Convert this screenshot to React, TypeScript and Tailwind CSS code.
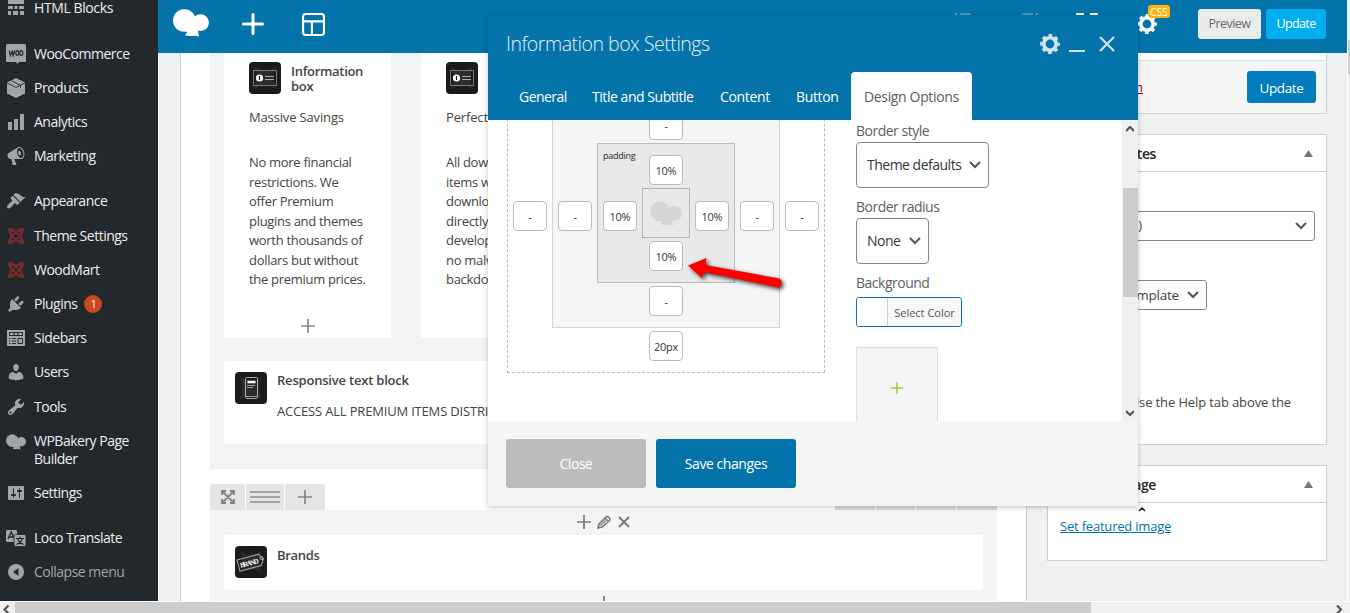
import type { ReactNode } from "react";

const PATHS = {
  bars: "M18 18V2h-4v16h4zm-6 0V7H8v11h4zm-6 0v-8H2v8h4z",
  megaphone:
    "M18.15 5.94c.46 1.62.38 3.22-.02 4.48-.42 1.28-1.26 2.18-2.3 2.48-.16.06-.26.06-.4.06-.06.02-.12.02-.18.02-.06.02-.14.02-.22.02h-6.8l2.22 5.5c.02.14-.06.26-.14.34-.08.1-.24.16-.34.16H6.95c-.1 0-.26-.06-.34-.16-.08-.08-.16-.2-.14-.34l-1-5.5H4.25l-.02-.02c-.5.06-1.08-.18-1.54-.62s-.88-1.08-1.06-1.88c-.24-.8-.2-1.56-.02-2.2.18-.62.58-1.08 1.06-1.3l.02-.02 9-5.4c.1-.06.18-.1.24-.16.06-.04.14-.08.24-.12.16-.08.28-.12.5-.18 1.04-.3 2.24.1 3.22.98s1.84 2.24 2.26 3.86zm-2.58 5.98h-.02c.4-.1.74-.34 1.04-.7.58-.7.86-1.76.86-3.04 0-.64-.1-1.3-.28-1.98-.34-1.36-1.02-2.5-1.78-3.24s-1.68-1.1-2.46-.88c-.82.22-1.4.96-1.7 2-.32 1.04-.28 2.36.06 3.72.38 1.36 1 2.5 1.8 3.24.78.74 1.62 1.1 2.48.88zm-2.54-7.08c.22-.04.42-.02.62.04.38.16.76.48 1.02 1s.42 1.2.42 1.78c0 .3-.04.56-.12.8-.18.48-.44.84-.86.94-.34.1-.8-.06-1.14-.4s-.64-.86-.78-1.5c-.18-.62-.12-1.24.02-1.72s.48-.84.82-.94z",
  brush:
    "M14.48 11.06L7.41 3.99l1.5-1.5c.5-.56 2.3-.47 3.51.32 1.21.8 1.43 1.28 2.91 2.1 1.18.64 2.45 1.26 4.45.85zm-.71.71L6.7 4.7 4.93 6.47c-.39.39-.39 1.02 0 1.41l1.06 1.06c.39.39.39 1.03 0 1.42-.6.6-1.43 1.11-2.21 1.69-.35.26-.7.53-1.01.84C1.43 14.23.4 16.08 1.4 17.07c.99 1 2.84-.03 4.18-1.36.31-.31.58-.66.85-1.02.57-.78 1.08-1.61 1.69-2.21.39-.39 1.02-.39 1.41 0l1.06 1.06c.39.39 1.02.39 1.41 0z",
  plug: "M13.11 4.36L9.87 7.6 8 5.73l3.24-3.24c.35-.34 1.05-.2 1.56.32.52.51.66 1.21.31 1.55zm-8 1.77l.91-1.12 9.01 9.01-1.19.84c-.71.71-2.63 1.16-3.82 1.16H6.14L4.9 17.26c-.59.59-1.54.59-2.12 0-.59-.58-.59-1.53 0-2.12l1.24-1.24v-3.88c0-1.13.4-3.19 1.09-3.89zm7.26 3.97l3.24-3.24c.34-.35 1.04-.21 1.55.31.52.51.66 1.21.31 1.55l-3.24 3.25z",
  user: "M10 9.25c-2.27 0-2.73-3.44-2.73-3.44C7 4.02 7.82 2 9.97 2c2.16 0 2.98 2.02 2.71 3.81 0 0-.41 3.44-2.68 3.44zm0 2.57L12.72 10c2.39 0 4.52 2.33 4.52 4.53v2.49s-3.65 1.13-7.24 1.13c-3.65 0-7.24-1.13-7.24-1.13v-2.49c0-2.25 1.94-4.48 4.47-4.48z",
  wrench:
    "M16.68 9.77c-1.34 1.34-3.3 1.67-4.95.99l-5.41 6.52c-.99.99-2.59.99-3.58 0s-.99-2.59 0-3.57l6.52-5.42c-.68-1.65-.35-3.61.99-4.95 1.28-1.28 3.12-1.62 4.72-1.06l-2.89 2.89 2.82 2.82 2.86-2.87c.53 1.58.18 3.39-1.08 4.65zM3.81 16.21c.4.39 1.04.39 1.43 0 .4-.4.4-1.04 0-1.43-.39-.4-1.03-.4-1.43 0-.39.39-.39 1.03 0 1.43z",
  sliders:
    "M18 16V4c0-.55-.45-1-1-1H3c-.55 0-1 .45-1 1v12c0 .55.45 1 1 1h14c.55 0 1-.45 1-1zM8 11h1c.55 0 1 .45 1 1s-.45 1-1 1H8v1.5c0 .28-.22.5-.5.5s-.5-.22-.5-.5V13H6c-.55 0-1-.45-1-1s.45-1 1-1h1V5.5c0-.28.22-.5.5-.5s.5.22.5.5V11zm5-2h-1c-.55 0-1-.45-1-1s.45-1 1-1h1V5.5c0-.28.22-.5.5-.5s.5.22.5.5V7h1c.55 0 1 .45 1 1s-.45 1-1 1h-1v5.5c0 .28-.22.5-.5.5s-.5-.22-.5-.5V9z",
};

function Dash({ d }: { d: string }) {
  return (
    <svg viewBox="0 0 20 20" className="size-5 fill-[#a0a5aa]">
      <path d={d} />
    </svg>
  );
}

function Bakery({ className }: { className: string }) {
  return (
    <svg viewBox="0 0 36 28" className={className}>
      <circle cx="11.3" cy="11.5" r="11.3" />
      <circle cx="27.6" cy="13.6" r="8.4" />
      <path d="M17 5l5 3 2-2 3 12-2 4 1 6-3-1.2-7 .2-4-.8 2-2.6-2.5-3z" />
    </svg>
  );
}

function Gear({ className }: { className: string }) {
  return (
    <svg viewBox="0 0 20 20" className={className} fill="none" stroke="currentColor">
      <circle cx="10" cy="10" r="6.2" strokeWidth="3.6" />
      <circle cx="10" cy="10" r="8.6" strokeWidth="2.6" strokeDasharray="3.6 3.154" strokeDashoffset="1.8" />
    </svg>
  );
}

function Plus({ className }: { className: string }) {
  return (
    <svg viewBox="0 0 14 14" className={className} fill="none" stroke="currentColor" strokeWidth="1.7">
      <path d="M7 0v14M0 7h14" />
    </svg>
  );
}

function Chevron({ className = "w-3 h-2" }: { className?: string }) {
  return (
    <svg viewBox="0 0 12 8" className={className} fill="none" stroke="#555" strokeWidth="2">
      <path d="M1 1l5 5 5-5" />
    </svg>
  );
}

function Knot() {
  return (
    <svg viewBox="0 0 20 20" className="size-[18px]" fill="none" stroke="#7c2a30" strokeWidth="1.9">
      <ellipse cx="10" cy="10" rx="10.6" ry="3" transform="rotate(45 10 10)" />
      <ellipse cx="10" cy="10" rx="10.6" ry="3" transform="rotate(-45 10 10)" />
      <path d="M3 3q7 4 14 0q-4 7 0 14q-7-4-14 0q4-7 0-14z" />
    </svg>
  );
}

const blocksIcon = (
  <svg viewBox="0 0 20 20" className="size-5 fill-[#a0a5aa]">
    <path d="M2 1h16v5H2zM2 8h5v3H2zM8.500 8h3v3h-3zM13 8h5v3h-5zM2 13h3v4H2zM7 13h5v4H7zM14 13h4v4h-4z" />
  </svg>
);
const wooIcon = (
  <svg viewBox="0 0 20 20" className="size-5">
    <path d="M1.500 0h17q1.500 0 1.500 1.500v15q0 1.500-1.500 1.500H13l-1.500 2-1.500-2H1.500Q0 18 0 16.500v-15Q0 0 1.500 0z" fill="#a0a5aa" />
    <path d="M3.300 6.500l1 5 1.900-4 1 4 1.500-5" fill="none" stroke="#23282d" strokeWidth="1.300" />
    <ellipse cx="11.300" cy="9" rx="1.500" ry="2.300" fill="none" stroke="#23282d" strokeWidth="1.200" />
    <ellipse cx="15.300" cy="9" rx="1.500" ry="2.300" fill="none" stroke="#23282d" strokeWidth="1.200" />
  </svg>
);
const boxIcon = (
  <svg viewBox="0 0 20 20" className="size-5">
    <path d="M10 0l9 4.500v11L10 20l-9-4.500v-11z" fill="#a0a5aa" />
    <path d="M1 5l9 4.500L19 5M5.500 2.800l9 4.500V10" fill="none" stroke="#23282d" strokeWidth=".9" />
  </svg>
);
const sidebarsIcon = (
  <svg viewBox="0 0 20 20" className="size-5">
    <path d="M1 2h18v16H1z" fill="#a0a5aa" />
    <path d="M3.500 4.500h13v3h-13zM8 4.500v3M12 4.500v3M12 10.500h4.500v5H12zM3 10.500h1.500M6 10.500h4M3 13h1.500M6 13h4M3 15.500h1.500M6 15.500h4" fill="none" stroke="#23282d" />
  </svg>
);
const locoIcon = (
  <svg viewBox="0 0 20 20" className="size-5">
    <rect y="2" width="11" height="12" rx="1.500" fill="#a0a5aa" />
    <path d="M2 11l3.300-7 3.300 7M3.300 9h4" fill="none" stroke="#23282d" strokeWidth="1.400" />
    <rect x="8" y="6.500" width="12" height="12" rx="1.500" fill="#a0a5aa" stroke="#23282d" strokeWidth=".8" />
    <path d="M10 10.500h8M14 8.500v2M16.500 10.500q-1.500 4-6 6M11.500 10.500q1.500 4 6 6" fill="none" stroke="#23282d" strokeWidth="1.100" />
  </svg>
);
const collapseIcon = (
  <svg viewBox="0 0 20 20" className="size-5">
    <circle cx="10" cy="10" r="8" fill="#a0a5aa" />
    <path d="M12.500 6v8L7 10z" fill="#23282d" />
  </svg>
);

type Item = { label: string; icon: ReactNode; cls?: string; badge?: string };

const MENU: Item[] = [
  { label: "HTML Blocks", icon: blocksIcon, cls: "-mt-[9px] tracking-[-0.4px]" },
  { label: "WooCommerce", icon: wooIcon, cls: "mt-3" },
  { label: "Products", icon: boxIcon },
  { label: "Analytics", icon: <Dash d={PATHS.bars} /> },
  { label: "Marketing", icon: <Dash d={PATHS.megaphone} /> },
  { label: "Appearance", icon: <Dash d={PATHS.brush} />, cls: "mt-[11px]" },
  { label: "Theme Settings", icon: <Knot />, cls: "mt-px" },
  { label: "WoodMart", icon: <Knot /> },
  { label: "Plugins", icon: <Dash d={PATHS.plug} />, badge: "1" },
  { label: "Sidebars", icon: sidebarsIcon },
  { label: "Users", icon: <Dash d={PATHS.user} /> },
  { label: "Tools", icon: <Dash d={PATHS.wrench} />, cls: "mt-px" },
  { label: "WPBakery Page Builder", icon: <Bakery className="w-5 h-4 mt-0.5 fill-[#a0a5aa]" />, cls: "h-[52px]" },
  { label: "Settings", icon: <Dash d={PATHS.sliders} /> },
  { label: "Loco Translate", icon: locoIcon, cls: "mt-[11px]" },
  { label: "Collapse menu", icon: collapseIcon, cls: "text-[#a0a5aa] tracking-[-0.5px]" },
];

function Sidebar() {
  return (
    <nav className="w-[158px] shrink-0 bg-[#23282d] overflow-hidden flex flex-col text-sm leading-[18px] tracking-[-0.5px] text-[#eee]">
      {MENU.map((m) => (
        <a key={m.label} className={`flex min-h-[34px] shrink-0 items-start pt-2 pl-1.5 ${m.cls ?? ""}`}>
          <span className="w-5 h-[18px] mr-2 flex items-center justify-center shrink-0">{m.icon}</span>
          <span className="w-[105px]">
            {m.label}
            {m.badge && (
              <span className="ml-[7px] inline-flex size-[18px] items-center justify-center rounded-full bg-[#ca4a1f] text-[11px] text-white align-top">
                {m.badge}
              </span>
            )}
          </span>
        </a>
      ))}
    </nav>
  );
}

function TopBar() {
  return (
    <header className="h-[53px] shrink-0 bg-[#0473aa] flex items-start text-white">
      <Bakery className="w-9 h-7 mt-[9px] ml-[15px] fill-white" />
      <svg viewBox="0 0 22 22" className="size-[22px] mt-[13px] ml-[33px]" stroke="currentColor" strokeWidth="3" strokeLinecap="round">
        <path d="M11 1.500v19M1.500 11h19" />
      </svg>
      <svg viewBox="0 0 22 22" className="size-[23px] mt-[13px] ml-[38px]" fill="none" stroke="currentColor" strokeWidth="2">
        <rect x="1" y="1" width="20" height="20" rx="2.500" />
        <path d="M1 8h20M9.500 8v13" />
      </svg>
      <svg viewBox="0 0 18 22" className="w-[18px] h-[22px] mt-[13px] ml-[630px] opacity-30" fill="none" stroke="currentColor" strokeWidth="3">
        <path d="M1 0v8M5 1.500h9q3 2 3 7" />
      </svg>
      <svg viewBox="0 0 18 22" className="w-[18px] h-[22px] mt-[13px] ml-[47px] opacity-30" fill="none" stroke="currentColor" strokeWidth="3">
        <path d="M17 0v8M13 1.500H4Q1 3.500 1 8" />
      </svg>
      <svg viewBox="0 0 22 22" className="size-[22px] mt-[13px] ml-[38px]" fill="none" stroke="currentColor" strokeWidth="3">
        <path d="M8 1.500H1.500V8M14 1.500h6.500V8" />
      </svg>
      <div className="relative mt-[14px] ml-[39px]">
        <Gear className="size-5" />
        <span className="absolute left-[11px] -top-[9px] w-[22px] h-[13px] rounded-[3px] bg-[#ffb411] text-[10px] leading-[14px] text-center">CSS</span>
      </div>
      <button className="ml-[41px] mt-[9px] h-[30px] w-[63px] rounded-[3px] bg-[#ebebeb] pt-px text-[12.500px] tracking-[-0.55px] text-[#646970]">Preview</button>
      <button className="ml-[5px] mt-[9px] h-[30px] w-[60px] rounded-[3px] bg-[#00aef0] pt-px text-[12.500px] tracking-[-0.6px]">Update</button>
    </header>
  );
}

function Tile({ kind }: { kind: "info" | "text" | "brand" }) {
  return (
    <svg viewBox="0 0 32 32" className="size-8 shrink-0">
      <rect width="32" height="32" rx="4" fill="#1b1b1b" />
      <path d="M5 5q11 7 22 0-5 11 0 22-11-7-22 0 5-11 0-22z" fill="#2c2c2c" />
      {kind === "info" && (
        <>
          <rect x="4.500" y="8.500" width="23" height="15" fill="none" stroke="#777" />
          <circle cx="10.500" cy="16" r="3.600" fill="#fff" />
          <path d="M10.500 14v4" stroke="#222" strokeWidth="1.200" />
          <path d="M16 14.500h9M16 17.500h9" stroke="#aaa" strokeWidth="1.200" />
        </>
      )}
      {kind === "text" && (
        <>
          <rect x="10.500" y="5.500" width="12" height="21" rx="1" fill="none" stroke="#aaa" />
          <path d="M12.500 10h8" stroke="#fff" strokeWidth="2.500" />
          <path d="M12 13.500h8M12 15.500h6M11 24.500h11" stroke="#999" />
        </>
      )}
      {kind === "brand" && (
        <g transform="rotate(-15 16 16)">
          <path d="M3 10.500h22l4 5.500-4 6H3z" fill="none" stroke="#aaa" />
          <circle cx="27" cy="15" r="1.300" fill="none" stroke="#aaa" />
          <text x="4.500" y="19" fontSize="7" fontWeight="bold" fontFamily="Liberation Serif, serif" fill="#fff" textLength="19">BRAND</text>
        </g>
      )}
    </svg>
  );
}

function InfoCard({ title, heading, lines }: { title: string; heading: string; lines: string[] }) {
  return (
    <div className="w-[167px] h-[285px] shrink-0 bg-white pt-[9px] pl-[25px] flex flex-col">
      <div className="flex h-8 gap-2.5">
        <Tile kind="info" />
        <h4 className="w-20 pt-0.5 font-semibold leading-[15px] tracking-[-0.3px]">{title}</h4>
      </div>
      <p className="mt-[13px] leading-5 tracking-[-0.15px] whitespace-nowrap">{heading}</p>
      <div className="mt-[26px] leading-[19.500px] tracking-[-0.3px] whitespace-nowrap">
        {lines.map((l) => (
          <p key={l}>{l}</p>
        ))}
      </div>
      {title && <Plus className="size-3.5 mt-auto mb-[5px] ml-[52px] text-[#888]" />}
    </div>
  );
}

function Editor() {
  return (
    <section className="w-[847px] shrink-0 border-x border-[#ccd0d4] bg-white pl-[29px] flex flex-col overflow-hidden text-[13px] text-[#444] tracking-[-0.1px]">
      <div className="w-[787px] h-[416px] shrink-0 bg-[#f4f4f4] px-3.5 overflow-hidden">
        <div className="flex gap-[30px]">
          <InfoCard
            title="Information box"
            heading="Massive Savings"
            lines={["No more financial", "restrictions. We", "offer Premium", "plugins and themes", "worth thousands of", "dollars but without", "the premium prices."]}
          />
          <InfoCard title="" heading="Perfectly" lines={["All downloads", "items will be", "download", "directly from", "developers", "no malware", "backdoors."]} />
        </div>
        <div className="mt-[23px] h-[83px] rounded-[2px] bg-white flex gap-2.5 pt-[11px] pl-[11px]">
          <Tile kind="text" />
          <div className="-mt-px">
            <h4 className="font-semibold leading-[18px] tracking-[-0.2px]">Responsive text block</h4>
            <p className="mt-[13px] leading-[18px] tracking-[-0.18px] whitespace-nowrap">ACCESS ALL PREMIUM ITEMS DISTRIBUTED</p>
          </div>
        </div>
      </div>
      <div className="mt-[15px] w-[787px] h-[26px] shrink-0 flex gap-px text-[#888]">
        <span className="w-[35px] bg-[#e5e5e5] rounded-t-[2px] flex items-center justify-center">
          <svg viewBox="0 0 14 14" className="size-3.5" fill="none" stroke="currentColor" strokeWidth="2">
            <path d="M1 5V1h4M9 1h4v4M13 9v4H9M5 13H1V9M1 1l12 12M13 1L1 13" />
          </svg>
        </span>
        <span className="w-[38px] bg-[#e5e5e5] rounded-t-[2px] flex flex-col items-center justify-center gap-[3px]">
          <i className="w-[30px] h-0.5 bg-[#a3a3a3]" />
          <i className="w-[30px] h-0.5 bg-[#a3a3a3]" />
          <i className="w-[30px] h-0.5 bg-[#a3a3a3]" />
        </span>
        <span className="w-10 bg-[#e5e5e5] rounded-t-[2px] flex items-center justify-center">
          <Plus className="size-3.5" />
        </span>
        <span className="ml-auto w-10 bg-[#ddd]" />
        <span className="w-[39px] bg-[#ddd]" />
        <span className="w-10 bg-[#ddd]" />
        <span className="w-10 bg-[#ddd]" />
      </div>
      <div className="w-[787px] flex-1 bg-[#f4f4f4] px-3.5">
        <div className="h-[25px] flex items-center justify-center gap-1.5 pb-0.5 text-[#777]">
          <Plus className="size-3.5" />
          <svg viewBox="0 0 14 14" className="size-3.5" fill="none" stroke="currentColor" strokeWidth="1.600">
            <path d="M1 13l1-4L9 2q1.500-1 3 .500t.500 3L5 12zM8 3l3.500 3.500" />
            <path d="M3.500 10.500l5-5" strokeWidth="1.200" />
          </svg>
          <svg viewBox="0 0 14 14" className="size-3.5" fill="none" stroke="currentColor" strokeWidth="1.800">
            <path d="M2 2l10 10M12 2L2 12" />
          </svg>
        </div>
        <div className="h-[55px] rounded-[2px] bg-white flex gap-2.5 pt-[11px] pl-[11px]">
          <Tile kind="brand" />
          <h4 className="font-semibold leading-[18px] tracking-[-0.3px]">Brands</h4>
        </div>
        <Plus className="size-3.5 mt-[6px] mx-auto text-[#777]" />
      </div>
    </section>
  );
}

function Triangle() {
  return (
    <svg viewBox="0 0 9 7" className="w-[9px] h-[7px] fill-[#72777c]">
      <path d="M4.500 0L9 7H0z" />
    </svg>
  );
}

function MetaBoxes() {
  return (
    <aside className="ml-5 w-[280px] shrink-0 flex flex-col text-[13px] text-[#444] whitespace-nowrap">
      <div className="h-[61px] shrink-0 border-x border-b border-[#ccd0d4] bg-[#f5f5f5] flex flex-col">
        <div className="h-2 shrink-0 border-b border-[#ddd] bg-white" />
        <div className="flex-1 flex items-center justify-between pl-3 pr-2.5">
          <a className="w-[83px] flex justify-end pt-0.5 text-[#a00] underline">Move to Trash</a>
          <button className="w-[69px] h-8 rounded-[3px] bg-[#007cba] pt-0.5 text-white text-[13.500px] tracking-[-0.4px]">Update</button>
        </div>
      </div>
      <div className="mt-5 h-[311px] shrink-0 border border-[#ccd0d4] bg-white flex flex-col">
        <div className="h-[37px] shrink-0 border-b border-[#ccd0d4] flex items-center justify-between pl-3 pr-[13px]">
          <h3 className="w-24 flex justify-end pt-0.5 font-semibold text-sm tracking-[-0.4px] text-[#23282d]">Page Attributes</h3>
          <Triangle />
        </div>
        <div className="mt-[39px] ml-3 mr-[11px] h-[30px] shrink-0 rounded-[3px] border border-[#7e8993] flex items-center justify-between pr-[7px]">
          <span className="w-[81px] text-right">(no parent)</span>
          <Chevron />
        </div>
        <div className="mt-[39px] ml-3 w-[147px] h-[30px] shrink-0 rounded-[3px] border border-[#7e8993] flex items-center justify-end gap-2 pr-[7px]">
          <span className="text-[13.500px] tracking-[-0.2px]">Default template</span>
          <Chevron />
        </div>
        <p className="mt-[82px] mr-[35px] text-right leading-5 tracking-[-0.12px]">Need help? Use the Help tab above the</p>
      </div>
      <div className="relative mt-5 h-24 shrink-0 border border-[#ccd0d4] bg-white">
        <div className="h-[37px] border-b border-[#ccd0d4] flex items-center justify-between pl-3 pr-[13px]">
          <h3 className="w-24 flex justify-end pt-px font-semibold text-sm tracking-[-0.4px] text-[#23282d]">Featured image</h3>
          <Triangle />
        </div>
        <svg viewBox="0 0 8 5" className="absolute left-[90px] top-[41px] w-2 h-[5px]" fill="none" stroke="#222" strokeWidth="1.500">
          <path d="M1 4l3-3 3 3" />
        </svg>
        <a className="block mt-[13px] ml-3 leading-5 tracking-[-0.2px] text-[#0073aa] underline">Set featured image</a>
      </div>
    </aside>
  );
}

function Box({ value }: { value: string }) {
  return (
    <span className="w-[34px] h-[30px] shrink-0 rounded-[4px] border border-[#bbb] bg-white flex items-center justify-center pt-0.5 text-[11px] tracking-[-0.3px] text-[#32373c]">
      {value}
    </span>
  );
}

function Ring({ values, className, children }: { values: string[]; className: string; children: ReactNode }) {
  const [top, right, bottom, left] = values;
  return (
    <div className={`relative flex flex-col items-center gap-[3px] border py-[11px] px-[5px] ${className}`}>
      <Box value={top} />
      <div className="flex items-center gap-[5px]">
        <div className="mt-1.5"><Box value={left} /></div>
        {children}
        <div className="mt-1.5"><Box value={right} /></div>
      </div>
      <Box value={bottom} />
    </div>
  );
}

const TABS = [
  { label: "General", cls: "w-[73px] tracking-[-0.55px]" },
  { label: "Title and Subtitle", cls: "w-32 tracking-[-0.45px]" },
  { label: "Content", cls: "w-[76px] tracking-[-0.35px]" },
  { label: "Button", cls: "w-[68px] tracking-[-0.35px]" },
  { label: "Design Options", cls: "w-[121px] tracking-[-0.35px] rounded-t-[4px] bg-white text-[#5a5a5a]" },
];

function Modal() {
  return (
    <div className="absolute left-[488px] top-[15px] w-[650px] h-[491px] flex flex-col shadow-[0_1px_5px_rgba(0,0,0,0.25)]">
      <div className="h-[105px] shrink-0 bg-[#0473aa] px-[18px] flex flex-col justify-between">
        <div className="flex items-center pt-[15px] text-[#d0e4ef]">
          <h2 className="mr-auto text-[19.500px] leading-7 font-light tracking-[-0.48px] text-[#e6f1f7]">Information box Settings</h2>
          <Gear className="size-5" />
          <span className="mx-[9px] mt-3.5 h-0.5 w-4 bg-current" />
          <svg viewBox="0 0 16 16" className="ml-[5px] mr-[5px] size-4" fill="none" stroke="currentColor" strokeWidth="2.200">
            <path d="M1 1l14 14M15 1L1 15" />
          </svg>
        </div>
        <div className="flex h-12 text-sm text-white whitespace-nowrap">
          {TABS.map((t) => (
            <span key={t.label} className={`pl-[13px] flex items-center pt-0.5 ${t.cls}`}>
              {t.label}
            </span>
          ))}
        </div>
      </div>
      <div className="h-[301px] shrink-0 bg-white flex overflow-hidden">
        <div className="ml-[19px] w-[318px] shrink-0">
          <div className="relative -mt-[67px]">
            <Ring values={["-", "-", "20px", "-"]} className="border-dashed border-[#bbb]">
              <Ring values={["-", "-", "-", "-"]} className="border-[#d2d2d2] bg-[#f5f5f5]">
                <Ring values={["10%", "10%", "10%", "10%"]} className="border-[#bbb] bg-[#e9e9e9]">
                  <span className="absolute left-[5px] top-[6px] text-[9px] leading-3 tracking-[-0.25px] text-[#23282d]">padding</span>
                  <div className="w-12 h-[50px] border border-[#b4b4b4] flex items-center justify-center">
                    <Bakery className="w-8 h-[25px] fill-[#d6d6d6]" />
                  </div>
                </Ring>
              </Ring>
            </Ring>
          </div>
        </div>
        <div className="ml-[31px] flex-1 flex flex-col items-start pt-px text-sm tracking-[-0.5px] text-[#5f5f5f]">
          <label className="h-[21px] shrink-0 leading-5">Border style</label>
          <div className="h-[46px] w-[133px] shrink-0 rounded-[4px] border border-[#7e8993] flex items-center justify-between pl-2.5 pr-[7px] text-[#32373c]">
            Theme defaults
            <Chevron />
          </div>
          <label className="mt-[9px] h-[21px] shrink-0 leading-5">Border radius</label>
          <div className="h-[46px] w-[73px] shrink-0 rounded-[4px] border border-[#7e8993] flex items-center justify-between pl-2.5 pr-[7px] text-[#32373c]">
            None
            <Chevron />
          </div>
          <label className="mt-[9px] shrink-0 leading-5">Background</label>
          <div className="mt-1 h-[30px] w-[106px] shrink-0 rounded-[3px] border border-[#0473aa] bg-[#f7f7f7] flex overflow-hidden">
            <span className="w-[31px] border-r border-[#ccc] bg-white" />
            <span className="flex-1 flex items-center justify-center pt-px text-[11px] tracking-normal text-[#555]">Select Color</span>
          </div>
          <div className="mt-5 h-[82px] w-[82px] shrink-0 border border-[#ddd] bg-[#f4f4f4] flex items-center justify-center">
            <Plus className="size-3 text-[#96cf3d]" />
          </div>
        </div>
        <div className="w-4 bg-[#f0f0f0] flex flex-col items-center">
          <svg viewBox="0 0 8 6" className="mt-[6px] w-2 h-1.5" fill="none" stroke="#505050" strokeWidth="2">
            <path d="M0 5l4-4 4 4" />
          </svg>
          <span className="mt-14 w-[15px] h-[109px] bg-[#cdcdcd]" />
          <svg viewBox="0 0 8 6" className="mt-auto mb-[5px] w-2 h-1.5" fill="none" stroke="#505050" strokeWidth="2">
            <path d="M0 1l4 4 4-4" />
          </svg>
        </div>
      </div>
      <div className="flex-1 bg-[#f5f5f5] flex gap-2.5 pt-[18px] pl-[18px] text-sm tracking-[-0.45px] text-white">
        <button className="w-[140px] h-[49px] rounded-[3px] bg-[#bcbcbc] pt-px">Close</button>
        <button className="w-[140px] h-[49px] rounded-[3px] bg-[#0473aa] pt-px">Save changes</button>
      </div>
      {/* pointer arrow */}
      <svg viewBox="0 0 106 40" className="absolute left-[196px] top-[240px] w-[106px] h-10">
        <path d="M4 10.500L22.500 3l-1 7 74 13.500a5 5 0 0 1-1.500 9L20 17l-2 6z" fill="#f00" style={{ filter: "drop-shadow(2px 2px 2px rgba(0,0,0,.75))" }} />
      </svg>
    </div>
  );
}

export default function App() {
  return (
    <div className="relative w-[1350px] h-[613px] overflow-hidden flex flex-col bg-[#f0f0f0] font-['Open_Sans','Noto_Sans',sans-serif]">
      <div className="flex h-[601px] shrink-0">
        <Sidebar />
        <main className="w-[1189px] flex flex-col">
          <TopBar />
          <div className="flex-1 min-h-0 flex pl-[22px]">
            <Editor />
            <MetaBoxes />
          </div>
        </main>
        <div className="w-[3px] border-l border-white bg-[#f0f0f0]">
          <div className="mt-10 h-[34px] bg-[#cdcdcd]" />
        </div>
      </div>
      <div className="flex-1 border-t border-white flex">
        <svg viewBox="0 0 15 11" className="w-[15px] h-[11px]" fill="none" stroke="#505050" strokeWidth="2">
          <path d="M8.500 3.500l-4 4 4 4" />
        </svg>
        <div className="w-[1076px] bg-[#cdcdcd]" />
        <svg viewBox="0 0 15 11" className="ml-auto mr-1 w-[15px] h-[11px]" fill="none" stroke="#505050" strokeWidth="2">
          <path d="M6 3.500l4 4-4 4" />
        </svg>
      </div>
      <Modal />
    </div>
  );
}
